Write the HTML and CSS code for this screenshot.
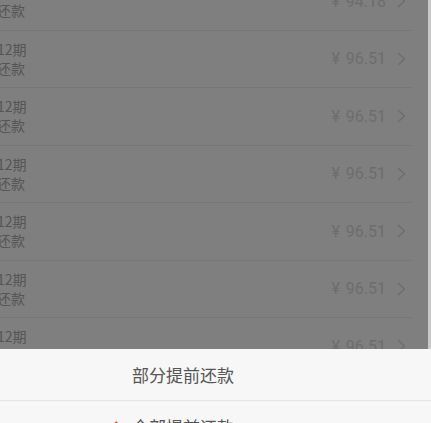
FILE: index.html
```html
<!DOCTYPE html>
<html lang="zh-CN">
<head>
<meta charset="utf-8">
<title>提前还款</title>
<link rel="stylesheet" href="styles.css">
</head>
<body>
<div class="screen">
  <ul class="list">
    <li class="row"><div class="term"><span>12期</span><span>还款</span></div><div class="amount"><span class="cur">¥</span>94.18</div><svg class="chev" width="9" height="14" viewBox="0 0 9 14"><polyline points="1.5,1.5 7.5,7 1.5,12.5"/></svg></li>
    <li class="row"><div class="term"><span>12期</span><span>还款</span></div><div class="amount"><span class="cur">¥</span>96.51</div><svg class="chev" width="9" height="14" viewBox="0 0 9 14"><polyline points="1.5,1.5 7.5,7 1.5,12.5"/></svg></li>
    <li class="row"><div class="term"><span>12期</span><span>还款</span></div><div class="amount"><span class="cur">¥</span>96.51</div><svg class="chev" width="9" height="14" viewBox="0 0 9 14"><polyline points="1.5,1.5 7.5,7 1.5,12.5"/></svg></li>
    <li class="row"><div class="term"><span>12期</span><span>还款</span></div><div class="amount"><span class="cur">¥</span>96.51</div><svg class="chev" width="9" height="14" viewBox="0 0 9 14"><polyline points="1.5,1.5 7.5,7 1.5,12.5"/></svg></li>
    <li class="row"><div class="term"><span>12期</span><span>还款</span></div><div class="amount"><span class="cur">¥</span>96.51</div><svg class="chev" width="9" height="14" viewBox="0 0 9 14"><polyline points="1.5,1.5 7.5,7 1.5,12.5"/></svg></li>
    <li class="row"><div class="term"><span>12期</span><span>还款</span></div><div class="amount"><span class="cur">¥</span>96.51</div><svg class="chev" width="9" height="14" viewBox="0 0 9 14"><polyline points="1.5,1.5 7.5,7 1.5,12.5"/></svg></li>
    <li class="row"><div class="term"><span>12期</span><span>还款</span></div><div class="amount"><span class="cur">¥</span>96.51</div><svg class="chev" width="9" height="14" viewBox="0 0 9 14"><polyline points="1.5,1.5 7.5,7 1.5,12.5"/></svg></li>
  </ul>
</div>
<div class="mask"></div>
<div class="sheet">
  <div class="option"><span class="label">部分提前还款</span></div>
  <div class="option selected">
    <span class="check"><svg width="14" height="11" viewBox="0 0 14 11"><polyline points="1.5,5.5 5,9 12.5,1.5"/></svg></span>
    <span class="label">全部提前还款</span>
  </div>
</div>
</body>
</html>
```

FILE: styles.css
```css
html, body {
  margin: 0;
  padding: 0;
  height: 100%;
  overflow: hidden;
}

body {
  background: #c9c9c9;
  font-family: "Noto Sans CJK SC", "Noto Sans", sans-serif;
  position: relative;
}

.screen {
  width: 428px;
  height: 100%;
  background: #ffffff;
  overflow: hidden;
}

.list {
  list-style: none;
  margin: -27px 0 0 -3px;
  padding: 0;
  width: 415px;
}

.row {
  box-sizing: border-box;
  height: 57.5px;
  border-bottom: 1px solid #eeeeee;
  display: flex;
  align-items: center;
  padding-right: 6px;
}

.term {
  flex: 1;
  display: flex;
  flex-direction: column;
  font-size: 14px;
  line-height: 19px;
  color: #ababab;
}

.amount {
  font-family: Roboto, "Noto Sans CJK SC", sans-serif;
  font-size: 16px;
  color: #dadada;
  margin-right: 11px;
  white-space: nowrap;
}

.cur {
  margin-right: 6px;
}

.chev polyline {
  fill: none;
  stroke: #dadada;
  stroke-width: 1.5;
  stroke-linecap: round;
  stroke-linejoin: round;
}

.mask {
  position: absolute;
  left: 0;
  top: 0;
  width: 428px;
  height: 349px;
  background: rgba(0, 0, 0, 0.5);
}

.sheet {
  position: absolute;
  left: 0;
  right: 0;
  top: 349px;
  background: #f7f7f7;
}

.option {
  box-sizing: border-box;
  height: 52px;
  padding-right: 65px;
  display: grid;
  grid-template-columns: 1fr auto 1fr;
  align-items: center;
  font-size: 17px;
  color: #555555;
  border-bottom: 1px solid #e6e6e6;
}

.option .label {
  grid-column: 2;
}

.check {
  grid-column: 1;
  justify-self: end;
  margin-right: 14px;
  display: flex;
}

.check polyline {
  fill: none;
  stroke: #e8383d;
  stroke-width: 2;
  stroke-linecap: round;
  stroke-linejoin: round;
}
```
